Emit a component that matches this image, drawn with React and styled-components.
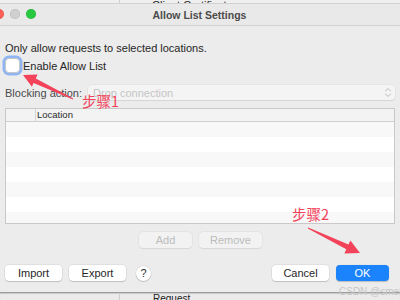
import React from "react";
import styled, { createGlobalStyle } from "styled-components";

const Global = createGlobalStyle`
  html, body { margin: 0; padding: 0; background: #e9e9e9; }
  body { font-family: "Liberation Sans", Arial, sans-serif; overflow: hidden; }
  * { box-sizing: border-box; }
`;

const Page = styled.div`
  position: relative;
  width: 400px;
  height: 300px;
  overflow: hidden;
  display: flex;
  flex-direction: column;
  background: #e9e9e9;
`;

const TopBackdrop = styled.div`
  position: relative;
  height: 3px;
  flex: none;
  overflow: hidden;
  background: #efefef;
  display: flex;
  align-items: flex-end;
`;

const BackdropPane = styled.div`
  width: 120px;
  height: 100%;
  border-right: 1px solid #cfcfcf;
  flex: none;
`;

const BackdropText = styled.span`
  margin-left: 32px;
  font-size: 11px;
  line-height: 11px;
  margin-bottom: -8px;
  color: #222;
  white-space: nowrap;
`;

const Window = styled.div`
  flex: none;
  height: 289px;
  background: #ececec;
  display: flex;
  flex-direction: column;
  border-top: 1px solid #d2d2d2;
`;

const TitleBar = styled.div`
  position: relative;
  height: 22px;
  flex: none;
  display: flex;
  align-items: center;
  justify-content: center;
  background: #e9e9e9;
  border-bottom: 1px solid #d3d3d3;
`;

const Lights = styled.div`
  position: absolute;
  left: -6px;
  top: 5px;
  display: flex;
  gap: 6px;
`;

const Light = styled.span`
  width: 10px;
  height: 10px;
  border-radius: 50%;
  background: ${(p) => p.$c};
  box-shadow: inset 0 0 0 0.5px rgba(0, 0, 0, 0.12);
`;

const Title = styled.div`
  font-size: 10.5px;
  font-weight: 700;
  color: #4b4b4b;
  margin-left: -1px;
`;

const Body = styled.div`
  flex: 1;
  display: flex;
  flex-direction: column;
  padding: 16px 5px 0 5px;
  color: #262626;
  font-size: 11px;
`;

const Intro = styled.div`
  line-height: 13px;
  height: 13px;
`;

const CheckRow = styled.label`
  margin-top: 3px;
  height: 15px;
  display: flex;
  align-items: center;
  gap: 3px;
`;

const CheckBox = styled.span`
  width: 15px;
  height: 15px;
  border-radius: 4px;
  background: #fff;
  border: 1px solid #c8c8c8;
  box-shadow: 0 0 0 2.5px #8fb5f3;
`;

const ActionRow = styled.div`
  margin-top: 12px;
  height: 15px;
  display: flex;
  align-items: center;
  gap: 6px;
`;

const Label = styled.span`
  color: #4a4a4a;
  white-space: nowrap;
`;

const Popup = styled.div`
  flex: 1;
  height: 15px;
  border-radius: 4px;
  background: #f4f4f4;
  box-shadow: 0 0 0 0.5px rgba(0, 0, 0, 0.06), 0 1px 1px rgba(0, 0, 0, 0.07);
  display: flex;
  align-items: center;
  justify-content: space-between;
  padding: 0 3px 0 5px;
  color: #c4c4c4;
  font-size: 11px;
`;

const Table = styled.div`
  margin-top: 8px;
  height: 116px;
  border: 1px solid #c9c9c9;
  background: #fff;
  display: flex;
  flex-direction: column;
  overflow: hidden;
`;

const HeaderRow = styled.div`
  height: 13px;
  flex: none;
  display: flex;
  background: #f3f3f3;
  border-bottom: 1px solid #cfcfcf;
  font-size: 9.5px;
  color: #2a2a2a;
`;

const HeaderCell = styled.div`
  width: ${(p) => (p.$w ? p.$w + "px" : "auto")};
  flex: ${(p) => (p.$w ? "none" : 1)};
  border-right: ${(p) => (p.$w ? "1px solid #d4d4d4" : "none")};
  padding-left: 1px;
  line-height: 12px;
`;

const Row = styled.div`
  height: 15px;
  flex: none;
  background: ${(p) => (p.$alt ? "#f8f8f8" : "#ffffff")};
`;

const TableButtons = styled.div`
  margin-top: 8px;
  height: 16px;
  display: flex;
  justify-content: center;
  gap: 7px;
  padding-left: 1px;
`;

const Button = styled.button`
  font-family: inherit;
  font-size: 11px;
  height: 16px;
  width: ${(p) => p.$w}px;
  padding: 0;
  border: none;
  border-radius: 4px;
  background: ${(p) => (p.$primary ? "#1b84fc" : p.disabled ? "#f2f2f2" : "#ffffff")};
  color: ${(p) => (p.$primary ? "#ffffff" : p.disabled ? "#bcbcbc" : "#262626")};
  box-shadow: ${(p) =>
    p.disabled
      ? "0 0 0 0.5px rgba(0,0,0,0.06), 0 0.5px 1px rgba(0,0,0,0.06)"
      : p.$primary
      ? "0 0.5px 1px rgba(0,0,0,0.2)"
      : "0 0 0 0.5px rgba(0,0,0,0.1), 0 1px 1px rgba(0,0,0,0.15)"};
  font-weight: ${(p) => (p.$primary ? 500 : 400)};
`;

const Footer = styled.div`
  margin-top: 17px;
  height: 16px;
  display: flex;
  align-items: center;
  gap: 7px;
  padding-right: 6px;
`;

const Help = styled.button`
  margin-left: 3px;
  width: 15px;
  height: 15px;
  border-radius: 50%;
  border: none;
  padding: 0;
  background: #fff;
  font-family: inherit;
  font-size: 11px;
  color: #303030;
  box-shadow: 0 0 0 0.5px rgba(0, 0, 0, 0.1), 0 1px 1px rgba(0, 0, 0, 0.15);
`;

const Spacer = styled.div`
  flex: 1;
`;

const BottomBackdrop = styled.div`
  flex: 1;
  background: #ebebeb;
  border-top: 1px solid #9c9c9c;
  box-shadow: inset 0 1px 1px rgba(0, 0, 0, 0.15);
  display: flex;
  overflow: hidden;
`;

const BottomText = styled.span`
  margin-left: 33px;
  margin-top: 1px;
  font-size: 10px;
  line-height: 10px;
  color: #222;
`;

const Overlay = styled.svg`
  position: absolute;
  left: 0;
  top: 0;
  pointer-events: none;
`;

const Note = styled.div`
  position: absolute;
  left: ${(p) => p.$x}px;
  top: ${(p) => p.$y}px;
  font-family: "Noto Sans CJK SC", sans-serif;
  font-size: 14.5px;
  line-height: 16px;
  color: #f2435a;
  pointer-events: none;
`;

const Watermark = styled.div`
  position: absolute;
  left: 339px;
  top: 286px;
  font-size: 10px;
  color: #c6c6c6;
  white-space: nowrap;
  pointer-events: none;
`;

function Chevrons() {
  return (
    <svg width="8" height="11" viewBox="0 0 8 11">
      <path d="M1.5 4 L4 1.5 L6.5 4" fill="none" stroke="#b9b9b9" strokeWidth="1" strokeLinecap="round" strokeLinejoin="round" />
      <path d="M1.5 7 L4 9.5 L6.5 7" fill="none" stroke="#b9b9b9" strokeWidth="1" strokeLinecap="round" strokeLinejoin="round" />
    </svg>
  );
}

export default function App() {
  const rows = [true, false, true, false, true, false, true];
  return (
    <>
      <Global />
      <Page>
        <TopBackdrop>
          <BackdropPane />
          <BackdropText>Client Certificates</BackdropText>
        </TopBackdrop>
        <Window>
          <TitleBar>
            <Lights>
              <Light $c="#fe5f57" />
              <Light $c="#cfcfcf" />
              <Light $c="#28c840" />
            </Lights>
            <Title>Allow List Settings</Title>
          </TitleBar>
          <Body>
            <Intro>Only allow requests to selected locations.</Intro>
            <CheckRow>
              <CheckBox />
              <span>Enable Allow List</span>
            </CheckRow>
            <ActionRow>
              <Label>Blocking action:</Label>
              <Popup>
                <span>Drop connection</span>
                <Chevrons />
              </Popup>
            </ActionRow>
            <Table>
              <HeaderRow>
                <HeaderCell $w={30} />
                <HeaderCell>Location</HeaderCell>
              </HeaderRow>
              {rows.map((alt, i) => (
                <Row key={i} $alt={alt} />
              ))}
            </Table>
            <TableButtons>
              <Button $w={53} disabled>Add</Button>
              <Button $w={63} disabled>Remove</Button>
            </TableButtons>
            <Footer>
              <Button $w={57}>Import</Button>
              <Button $w={57}>Export</Button>
              <Help>?</Help>
              <Spacer />
              <Button $w={57}>Cancel</Button>
              <Button $w={53} $primary>OK</Button>
            </Footer>
          </Body>
        </Window>
        <BottomBackdrop>
          <BackdropPane />
          <BottomText>Request</BottomText>
        </BottomBackdrop>
        <Overlay width="400" height="300" viewBox="0 0 400 300">
          <polygon
            points="73.2,98.6 35.8,78.4 37.5,74.5 23,75 31.9,86.7 33.6,82.9 72.8,99.4"
            fill="#f2435a"
          />
          <polygon
            points="307.8,228.5 346.3,249.2 344.4,253.4 360,253 350.4,240.4 348.5,244.6 308.2,227.5"
            fill="#f2435a"
          />
        </Overlay>
        <Note $x={82} $y={93}>步骤1</Note>
        <Note $x={292} $y={206}>步骤2</Note>
        <Watermark>CSDN @smelloft</Watermark>
      </Page>
    </>
  );
}
